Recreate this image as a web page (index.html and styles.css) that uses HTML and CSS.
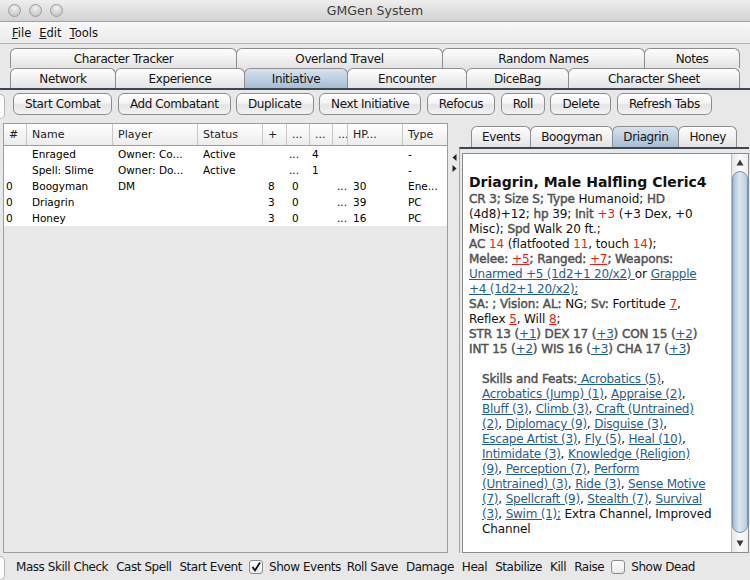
FILE: index.html
```html
<!DOCTYPE html>
<html>
<head>
<meta charset="utf-8">
<title>GMGen System</title>
<link rel="stylesheet" href="styles.css">
</head>
<body>
<div class="win">
  <div class="titlebar">
    <div class="lights"><span class="light"></span><span class="light"></span><span class="light"></span></div>
    <div class="title">GMGen System</div>
    <div></div>
  </div>
  <div class="menubar"><span><u>F</u>ile</span><span><u>E</u>dit</span><span><u>T</u>ools</span></div>
  <div class="maintabs">
    <div class="tabrow">
      <div class="tab w227">Character Tracker</div>
      <div class="tab w207">Overland Travel</div>
      <div class="tab w203">Random Names</div>
      <div class="tab w96">Notes</div>
    </div>
    <div class="tabrow">
      <div class="tab w106">Network</div>
      <div class="tab w130">Experience</div>
      <div class="tab w104 sel">Initiative</div>
      <div class="tab w120">Encounter</div>
      <div class="tab w103">DiceBag</div>
      <div class="tab w172">Character Sheet</div>
    </div>
  </div>
  <div class="content">
    <div class="toolbar">
      <div class="grip"></div>
      <div class="buttons">
        <button class="btn">Start Combat</button>
        <button class="btn">Add Combatant</button>
        <button class="btn">Duplicate</button>
        <button class="btn">Next Initiative</button>
        <button class="btn">Refocus</button>
        <button class="btn">Roll</button>
        <button class="btn">Delete</button>
        <button class="btn">Refresh Tabs</button>
      </div>
    </div>
    <div class="split">
      <div class="tablepane">
        <div class="grid thead">
          <div class="th">#</div><div class="th">Name</div><div class="th">Player</div><div class="th">Status</div><div class="th">+</div><div class="th">...</div><div class="th">...</div><div class="th">...</div><div class="th">HP...</div><div class="th last">Type</div>
        </div>
        <div class="grid trow">
          <div class="td"></div><div class="td">Enraged</div><div class="td">Owner: Co...</div><div class="td">Active</div><div class="td"></div><div class="td tight">...</div><div class="td tight">4</div><div class="td"></div><div class="td"></div><div class="td">-</div>
        </div>
        <div class="grid trow">
          <div class="td"></div><div class="td">Spell: Slime</div><div class="td">Owner: Do...</div><div class="td">Active</div><div class="td"></div><div class="td tight">...</div><div class="td tight">1</div><div class="td"></div><div class="td"></div><div class="td">-</div>
        </div>
        <div class="grid trow">
          <div class="td first">0</div><div class="td">Boogyman</div><div class="td">DM</div><div class="td"></div><div class="td">8</div><div class="td">0</div><div class="td"></div><div class="td dots">...</div><div class="td">30</div><div class="td">Ene...</div>
        </div>
        <div class="grid trow">
          <div class="td first">0</div><div class="td">Driagrin</div><div class="td"></div><div class="td"></div><div class="td">3</div><div class="td">0</div><div class="td"></div><div class="td dots">...</div><div class="td">39</div><div class="td">PC</div>
        </div>
        <div class="grid trow">
          <div class="td first">0</div><div class="td">Honey</div><div class="td"></div><div class="td"></div><div class="td">3</div><div class="td">0</div><div class="td"></div><div class="td dots">...</div><div class="td">16</div><div class="td">PC</div>
        </div>
      </div>
      <div class="divider">
        <svg width="5" height="7" viewBox="0 0 5 7"><path d="M4.5 0 L0.5 3.5 L4.5 7 Z" fill="#222"/></svg>
        <svg width="5" height="7" viewBox="0 0 5 7"><path d="M0.5 0 L4.5 3.5 L0.5 7 Z" fill="#222"/></svg>
      </div>
      <div class="rightpane">
        <div class="subtabs">
          <div class="tab sub">Events</div>
          <div class="tab sub">Boogyman</div>
          <div class="tab sub sel">Driagrin</div>
          <div class="tab sub">Honey</div>
        </div>
        <div class="subbody">
          <div class="doc">
            <div class="doctext">
              <div class="h">Driagrin, Male Halfling Cleric4</div>
              <div class="ln"><span class="lb">CR 3; Size S; Type</span> Humanoid; <span class="lb">HD</span></div>
              <div class="ln">(4d8)+12; <span class="lb">hp</span> 39; <span class="lb">Init</span> <span class="r">+3</span> (+3 Dex, +0</div>
              <div class="ln">Misc); <span class="lb">Spd</span> Walk 20 ft.;</div>
              <div class="ln"><span class="lb">AC</span> <span class="r">14</span> (flatfooted <span class="r">11</span>, touch <span class="r">14</span>);</div>
              <div class="ln"><span class="lb">Melee:</span> <span class="r u">+5</span><span class="lb">; Ranged:</span> <span class="r u">+7</span><span class="lb">; Weapons:</span><span class="lk"> </span></div>
              <div class="ln"><span class="lk">Unarmed +5 (1d2+1 20/x2) </span>or <span class="lk">Grapple</span></div>
              <div class="ln"><span class="lk">+4 (1d2+1 20/x2);</span></div>
              <div class="ln"><span class="lb">SA: ; Vision: AL:</span> NG; <span class="lb">Sv:</span> Fortitude <span class="r u">7</span>,</div>
              <div class="ln">Reflex <span class="r u">5</span>, Will <span class="r u">8</span>;</div>
              <div class="ln"><span class="lb">STR 13 (</span><span class="lk">+1</span><span class="lb">) DEX 17 (</span><span class="lk">+3</span><span class="lb">) CON 15 (</span><span class="lk">+2</span><span class="lb">)</span></div>
              <div class="ln"><span class="lb">INT 15 (</span><span class="lk">+2</span><span class="lb">) WIS 16 (</span><span class="lk">+3</span><span class="lb">) CHA 17 (</span><span class="lk">+3</span><span class="lb">)</span></div>
              <div class="ln"></div>
              <div class="skills">
                <div class="ln"><span class="lb">Skills and Feats:</span><span class="lk"> Acrobatics (5)</span>,</div>
                <div class="ln"><span class="lk">Acrobatics (Jump) (1)</span>, <span class="lk">Appraise (2)</span>,</div>
                <div class="ln"><span class="lk">Bluff (3)</span>, <span class="lk">Climb (3)</span>, <span class="lk">Craft (Untrained)</span></div>
                <div class="ln"><span class="lk">(2)</span>, <span class="lk">Diplomacy (9)</span>, <span class="lk">Disguise (3)</span>,</div>
                <div class="ln"><span class="lk">Escape Artist (3)</span>, <span class="lk">Fly (5)</span>, <span class="lk">Heal (10)</span>,</div>
                <div class="ln"><span class="lk">Intimidate (3)</span>, <span class="lk">Knowledge (Religion)</span></div>
                <div class="ln"><span class="lk">(9)</span>, <span class="lk">Perception (7)</span>, <span class="lk">Perform</span></div>
                <div class="ln"><span class="lk">(Untrained) (3)</span>, <span class="lk">Ride (3)</span>, <span class="lk">Sense Motive</span></div>
                <div class="ln"><span class="lk">(7)</span>, <span class="lk">Spellcraft (9)</span>, <span class="lk">Stealth (7)</span>, <span class="lk">Survival</span></div>
                <div class="ln"><span class="lk">(3)</span>, <span class="lk">Swim (1);</span> Extra Channel, Improved</div>
                <div class="ln">Channel</div>
              </div>
            </div>
            <div class="vscroll">
              <div class="arrow"><svg width="8" height="7" viewBox="0 0 8 7"><path d="M4 0.5 L7.5 6.5 L0.5 6.5 Z" fill="#3a3a3a"/></svg></div>
              <div class="thumb"></div>
              <div class="arrow"><svg width="8" height="7" viewBox="0 0 8 7"><path d="M0.5 0.5 L7.5 0.5 L4 6.5 Z" fill="#3a3a3a"/></svg></div>
            </div>
          </div>
        </div>
      </div>
    </div>
    <div class="bottombar">
      <div class="grip low"></div>
      <div class="bitems">
        <span class="bi">Mass Skill Check</span>
        <span class="bi">Cast Spell</span>
        <span class="bi">Start Event</span>
        <span class="bi chk first"><span class="box"><svg width="12" height="12" viewBox="0 0 12 12"><path d="M2.5 6 L5 9.5 L10 1.5" fill="none" stroke="#111" stroke-width="1.8"/></svg></span>Show Events</span>
        <span class="bi">Roll Save</span>
        <span class="bi">Damage</span>
        <span class="bi">Heal</span>
        <span class="bi">Stabilize</span>
        <span class="bi">Kill</span>
        <span class="bi">Raise</span>
        <span class="bi chk"><span class="box"></span>Show Dead</span>
      </div>
    </div>
  </div>
</div>
</body>
</html>
```

FILE: styles.css
```css
* { box-sizing: border-box; margin: 0; padding: 0; }
html, body { width: 750px; height: 580px; overflow: hidden; }
body { font-family: "DejaVu Sans", "Noto Sans", sans-serif; background: #e8e8e8; color: #111; }

.win { width: 750px; height: 580px; display: flex; flex-direction: column; }

.titlebar {
  height: 22px; border-bottom: 1px solid #a2a2a2;
  background: linear-gradient(#eeeeee, #d2d2d2);
  display: grid; grid-template-columns: 1fr auto 1fr; align-items: center;
}
.lights { display: flex; gap: 8px; padding-left: 8px; }
.light {
  width: 13px; height: 13px; border-radius: 50%;
  border: 1px solid #9d9d9d;
  background: radial-gradient(circle at 50% 30%, #f2f2f2 0%, #d3d3d3 55%, #bdbdbd 100%);
}
.title { font-size: 12.5px; color: #3c3c3c; }

.menubar {
  height: 22px; border-bottom: 1px solid #b4b4b4;
  background: linear-gradient(#f8f8f8, #ebebeb);
  display: flex; align-items: center; gap: 8px; padding-left: 12px;
  font-size: 11.5px; color: #111;
}

.maintabs { padding-top: 4px; }
.tabrow { display: flex; padding-left: 10px; }
.tab {
  height: 20px; display: flex; align-items: center; justify-content: center;
  border: 1px solid #8d8d8d; border-bottom: none; border-radius: 6px 6px 0 0;
  background: linear-gradient(#fefefe, #e3e3e3);
  margin-right: -1px; font-size: 12px; letter-spacing: -0.4px; color: #151515;
  white-space: nowrap;
}
.tab.sel { background: linear-gradient(#d7e2ec, #a6bed4); }
.w227 { width: 227px; } .w207 { width: 207px; } .w203 { width: 203px; } .w96 { width: 96px; }
.w106 { width: 106px; } .w130 { width: 130px; } .w104 { width: 104px; } .w120 { width: 120px; }
.w103 { width: 103px; } .w172 { width: 172px; }

.content { border-top: 2px solid #3d4754; flex: 1; display: flex; flex-direction: column; }

.toolbar { height: 32px; display: flex; align-items: flex-start; }
.grip {
  width: 5px; height: 25px; margin-top: 4px;
  background: #fbfbfb; border: 1px solid #b7b7b7; border-left: none;
  border-radius: 0 5px 5px 0;
}
.grip.low { margin-top: 3px; height: 24px; }
.buttons { display: flex; gap: 5.5px; margin-left: 8px; margin-top: 3px; }
.btn {
  height: 22px; padding: 0 11px; border: 1px solid #8e8e8e; border-radius: 6px;
  background: linear-gradient(#ffffff 0%, #f4f4f4 45%, #e4e4e4 55%, #f3f3f3 100%);
  font-family: "DejaVu Sans", sans-serif; font-size: 12px; letter-spacing: -0.4px; color: #151515;
  white-space: nowrap;
}

.split { height: 430px; margin-top: 1px; display: flex; }
.tablepane {
  width: 445px; margin-left: 3px; border: 1px solid #9c9c9c; background: #e8e8e8;
}
.grid { display: grid; grid-template-columns: 23px 86px 85px 65px 24px 23px 23px 15px 55px 44px; }
.thead {
  height: 22px; border-bottom: 1px solid #9d9d9d;
  background: linear-gradient(#ffffff, #ececec);
}
.th {
  font-size: 11px; color: #222; padding-left: 5px; display: flex; align-items: center;
  border-right: 1px solid #c6c6c6; white-space: nowrap; overflow: hidden;
}
.th.last { border-right: none; }
.trow { height: 16px; background: #ffffff; }
.td {
  font-size: 10.5px; color: #000; padding-left: 5px; line-height: 16px;
  white-space: nowrap; overflow: hidden;
}
.td.first { padding-left: 2px; }
.td.tight { padding-left: 2px; }
.td.dots { padding-left: 4px; }

.divider {
  width: 11px; display: flex; flex-direction: column; align-items: center;
  padding-top: 31px; gap: 4px; padding-left: 1px;
}

.rightpane { width: 290px; display: flex; flex-direction: column; }
.subtabs { display: flex; padding-left: 12px; margin-top: 2px; height: 22px; align-items: flex-end; }
.tab.sub { height: 21px; padding: 0 10px; }
.subbody {
  flex: 1; border-top: 2px solid #3d4754; border-left: 1px solid #a6a6a6;
  padding: 4px 0 0 2px; display: flex; flex-direction: column;
}
.doc { height: 400px; display: flex; border: 1px solid #8e8e8e; }
.doctext {
  flex: 1; background: #ffffff; overflow: hidden; white-space: nowrap;
  padding: 19px 0 0 6px; font-size: 12px; letter-spacing: -0.1px; color: #111;
}
.h { font-size: 14px; font-weight: bold; line-height: 19px; letter-spacing: 0; color: #111; }
.ln { line-height: 15px; height: 15px; }
.lb { color: #525252; -webkit-text-stroke: 0.45px #525252; }
.r { color: #ee1c1c; }
.u { text-decoration: underline; }
.lk { color: #1f5e95; text-decoration: underline; letter-spacing: -0.25px; }
.skills { padding-left: 13px; }

.vscroll {
  width: 17px; display: flex; flex-direction: column;
  border-left: 1px solid #bdbdbd;
  background: linear-gradient(to right, #e6e6e6, #fbfbfb 50%, #ececec);
}
.arrow { height: 17px; display: flex; align-items: center; justify-content: center; }
.thumb {
  flex: 1; margin: 0 0 2px 0; border-radius: 8px;
  border: 1px solid #7c93a9;
  background: linear-gradient(to right, #a3bdd6, #dbe7f2 45%, #b9cee2);
}

.bottombar { height: 27px; display: flex; align-items: flex-start; }
.bitems {
  display: flex; align-items: center; gap: 8px; margin-left: 11px; height: 27px;
  font-size: 12px; letter-spacing: -0.45px; color: #151515; white-space: nowrap;
}
.bi { display: flex; align-items: center; }
.chk { gap: 6px; margin-left: -1px; }
.chk.first { margin-right: -2px; }
.box {
  width: 14px; height: 14px; border: 1px solid #8b8b8b; border-radius: 3px;
  background: linear-gradient(#ffffff, #e9e9e9);
  display: flex; align-items: center; justify-content: center;
}
```
